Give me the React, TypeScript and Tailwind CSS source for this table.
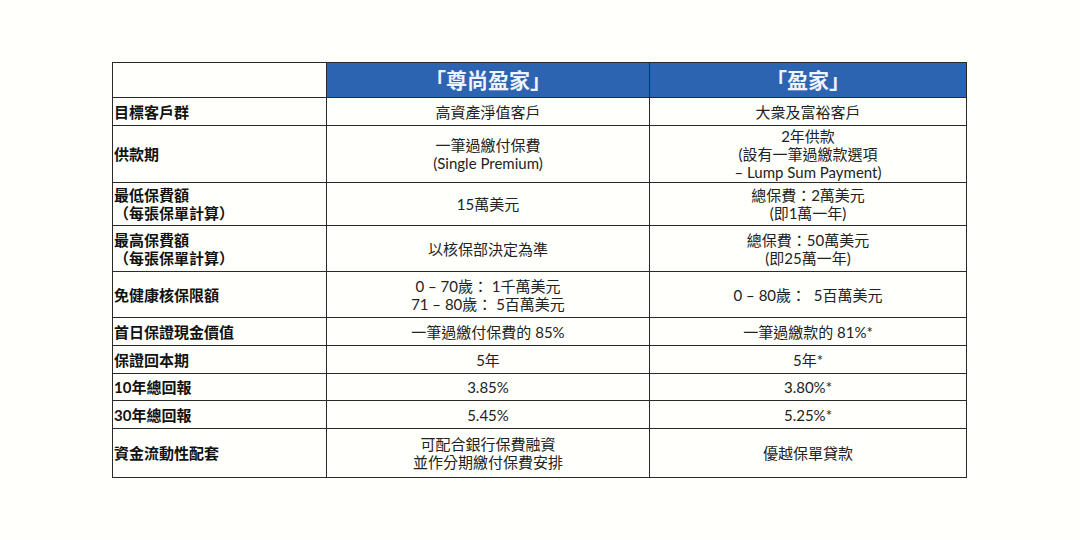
import React from "react";

const font = { fontFamily: "Lato, 'Noto Sans CJK TC', sans-serif" };

type Row = { label: React.ReactNode; a: React.ReactNode; b: React.ReactNode; h: string };

const rows: Row[] = [
  { label: "目標客戶群", a: "高資產淨值客戶", b: "大衆及富裕客戶", h: "h-[27px]" },
  {
    label: "供款期",
    a: (<><div>一筆過繳付保費</div><div>(Single Premium)</div></>),
    b: (<><div>2年供款</div><div>(設有一筆過繳款選項</div><div>– Lump Sum Payment)</div></>),
    h: "h-[56px]",
  },
  {
    label: (<><div>最低保費額</div><div>（每張保單計算）</div></>),
    a: "15萬美元",
    b: (<><div>總保費：2萬美元</div><div>(即1萬一年)</div></>),
    h: "h-[42px]",
  },
  {
    label: (<><div>最高保費額</div><div>（每張保單計算）</div></>),
    a: "以核保部決定為準",
    b: (<><div>總保費：50萬美元</div><div>(即25萬一年)</div></>),
    h: "h-[45px]",
  },
  {
    label: "免健康核保限額",
    a: (<><div>0 – 70歲：&nbsp;1千萬美元</div><div>71 – 80歲：&nbsp;5百萬美元</div></>),
    b: "0 – 80歲：  5百萬美元",
    h: "h-[45px]",
  },
  { label: "首日保證現金價值", a: "一筆過繳付保費的 85%", b: "一筆過繳款的 81%*", h: "h-[27px]" },
  { label: "保證回本期", a: "5年", b: "5年*", h: "h-[27px]" },
  { label: "10年總回報", a: "3.85%", b: "3.80%*", h: "h-[26px]" },
  { label: "30年總回報", a: "5.45%", b: "5.25%*", h: "h-[27px]" },
  {
    label: "資金流動性配套",
    a: (<><div>可配合銀行保費融資</div><div>並作分期繳付保費安排</div></>),
    b: "優越保單貸款",
    h: "h-[48px]",
  },
];

export default function App() {
  return (
    <div className="w-[1080px] h-[540px] bg-[#fffffb] pt-[62px] pl-[112px]" style={font}>
      <div className="inline-grid grid-cols-[213px_322px_316px] gap-px p-px bg-[#2a2a2a]">
        <div className="h-[34px] bg-[#fffffb]" />
        <div className="h-[34px] bg-[#2c64b2] flex items-center justify-center text-[21px] font-bold text-[#eef3ff]">「尊尚盈家」</div>
        <div className="h-[34px] bg-[#2c64b2] flex items-center justify-center text-[21px] font-bold text-[#eef3ff]">「盈家」</div>
        {rows.map((r, i) => (
          <React.Fragment key={i}>
            <div className={`${r.h} bg-[#fffffb] flex flex-col justify-center pl-[1px] text-[15px] font-bold leading-[18px] text-[#111]`}>
              {r.label}
            </div>
            <div className={`${r.h} bg-[#fffffb] flex flex-col items-center justify-center text-center text-[15px] leading-[18px] text-[#222] whitespace-pre`}>
              {r.a}
            </div>
            <div className={`${r.h} bg-[#fffffb] flex flex-col items-center justify-center text-center text-[15px] leading-[18px] text-[#222] whitespace-pre`}>
              {r.b}
            </div>
          </React.Fragment>
        ))}
      </div>
    </div>
  );
}
